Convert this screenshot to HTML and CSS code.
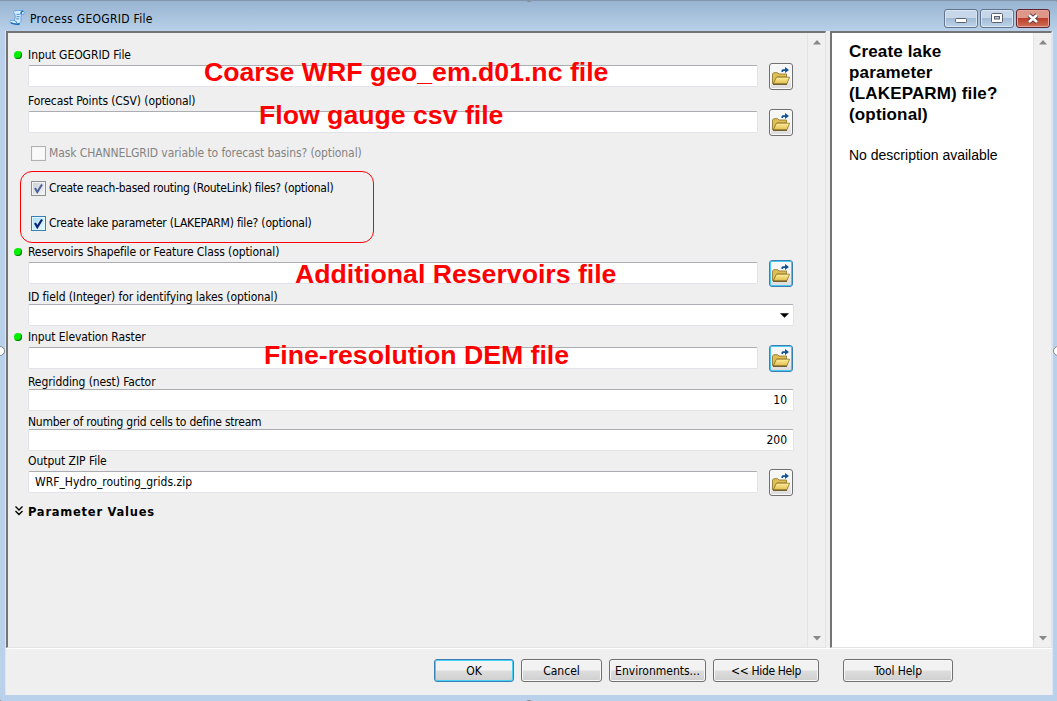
FILE: index.html
```html
<!DOCTYPE html>
<html lang="en">
<head>
<meta charset="utf-8">
<title>Process GEOGRID File</title>
<link rel="stylesheet" href="styles.css">
</head>
<body>
<svg class="defs" width="0" height="0">
  <defs>
    <linearGradient id="gold" x1="0" y1="0" x2="0" y2="1"><stop offset="0" stop-color="#fdf09c"/><stop offset="1" stop-color="#e2bd4e"/></linearGradient>
    <symbol id="folder" viewBox="0 0 20 20">
      <path d="M1.500 17.500V8l1.200-1.300h4L8 8h7.500v3H6L2.200 18z" fill="#dfbe55" stroke="#8a7124" stroke-width=".8"/>
      <path d="M2.300 17.800L5.400 11.200h13.200l-2.700 6.600z" fill="url(#gold)" stroke="#8f7325" stroke-width=".8"/>
      <path d="M2 18.300h14" stroke="#5b460e"/>
      <path d="M10.500 6V4.200l1-1H14V1L18 4l-4 3V5h-1.800v1z" fill="#125393"/>
    </symbol>
    <symbol id="down" viewBox="0 0 8 5"><path d="M0 0h8L4 4.500z" fill="#888"/></symbol>
    <symbol id="up" viewBox="0 0 8 5"><path d="M0 4.500h8L4 0z" fill="#888"/></symbol>
  </defs>
</svg>
<div class="window">
  <header class="titlebar">
    <svg class="app-icon" viewBox="0 0 18 18"><path d="M6 1.500Q10 .5 16 1.500Q18 3 16.500 5.500L14 5.500Q13 10 13.500 13.500Q12 17 9 16.500L2 15Q0 13 2 12L6 12.500Q8 8 6.500 5Q4 3.500 6 1.500Z" fill="#d4ecfc" stroke="#5c9fdd"/><path d="M13.500 5.500Q13 2.500 16 1.500M2 15Q8 17.500 12 16" fill="none" stroke="#1a6cbc" stroke-width="1.600"/><path d="M8.500 5.500h3.500M8.500 8h3.500M8 10.500h3.500M6 12.500Q9 13 9 16" fill="none" stroke="#3a7fc6"/></svg>
    <span class="title">Process GEOGRID File</span>
    <div class="controls">
      <span class="ctl"><svg viewBox="0 0 32 17"><rect x="10.500" y="8.500" width="11" height="4" rx="1" fill="#fff" stroke="#59606b"/></svg></span>
      <span class="ctl"><svg viewBox="0 0 32 17"><rect x="10.500" y="3.500" width="11" height="9" rx="1" fill="#fff" stroke="#59606b"/><rect x="13.500" y="6.500" width="5" height="2.500" fill="#b2c8df" stroke="#59606b"/></svg></span>
      <span class="ctl close"><svg viewBox="0 0 32 17"><path d="M12 5l8 7M20 5l-8 7" stroke="#5c3f44" stroke-width="4.600"/><path d="M12 5l8 7M20 5l-8 7" stroke="#fff" stroke-width="2.600"/></svg></span>
    </div>
  </header>
  <main class="client">
    <div class="panes">
      <section class="pane params">
        <div class="form">
          <div class="field file f1"><label class="required l1">Input GEOGRID File</label><div class="line"><div class="input"></div><button class="browse"><svg><use href="#folder"/></svg></button></div></div>
          <div class="field file f2"><label class="l2">Forecast Points (CSV) (optional)</label><div class="line"><div class="input"></div><button class="browse"><svg><use href="#folder"/></svg></button></div></div>
          <div class="check disabled c1"><i class="box"></i><span class="t1">Mask CHANNELGRID variable to forecast basins? (optional)</span></div>
          <div class="check c2"><i class="box"><svg viewBox="0 0 13 13"><path d="M3 6l2.300 4L10 2.500" fill="none" stroke="#4a5f9c" stroke-width="2"/></svg></i><span class="t2">Create reach-based routing (RouteLink) files? (optional)</span></div>
          <div class="check focus c3"><i class="box"><svg viewBox="0 0 13 13"><path d="M3 6l2.300 4L10 2.500" fill="none" stroke="#0b2478" stroke-width="2.200"/></svg></i><span class="t3">Create lake parameter (LAKEPARM) file? (optional)</span></div>
          <div class="field file f3"><label class="required l3">Reservoirs Shapefile or Feature Class (optional)</label><div class="line"><div class="input"></div><button class="browse hot"><svg><use href="#folder"/></svg></button></div></div>
          <div class="field f4"><label class="l4">ID field (Integer) for identifying lakes (optional)</label><div class="input select"><svg viewBox="0 0 8 4"><path d="M0 0h8L4 4z"/></svg></div></div>
          <div class="field file f5"><label class="required l5">Input Elevation Raster</label><div class="line"><div class="input"></div><button class="browse hot"><svg><use href="#folder"/></svg></button></div></div>
          <div class="field f6"><label class="l6">Regridding (nest) Factor</label><div class="input number">10</div></div>
          <div class="field f7"><label class="l7">Number of routing grid cells to define stream</label><div class="input number">200</div></div>
          <div class="field file f8"><label class="l8">Output ZIP File</label><div class="line"><div class="input"><span class="zip">WRF_Hydro_routing_grids.zip</span></div><button class="browse"><svg><use href="#folder"/></svg></button></div></div>
          <div class="group"><svg viewBox="0 0 8 10"><path d="M.5 .5L4 4 7.500 .5M.5 5L4 8.500 7.500 5" fill="none" stroke="#000" stroke-width="1.400"/></svg><span>Parameter Values</span></div>
        </div>
        <div class="scroll"><svg><use href="#up"/></svg><svg><use href="#down"/></svg></div>
      </section>
      <section class="pane help">
        <div class="help-text"><h1><span>Create lake</span><span>parameter</span><span>(LAKEPARM) file?</span><span>(optional)</span></h1><p>No description available</p></div>
        <div class="scroll"><svg><use href="#up"/></svg><svg><use href="#down"/></svg></div>
      </section>
    </div>
    <footer class="actions">
      <button class="btn default">OK</button>
      <button class="btn cancel">Cancel</button>
      <button class="btn env">Environments...</button>
      <button class="btn hide">&lt;&lt; Hide Help</button>
      <button class="btn tool">Tool Help</button>
    </footer>
  </main>
  <div class="note n1">Coarse WRF geo_em.d01.nc file</div>
  <div class="note n2">Flow gauge csv file</div>
  <div class="note n3">Additional Reservoirs file</div>
  <div class="note n4">Fine-resolution DEM file</div>
  <div class="outline"></div>
  <i class="handle h-tl"></i><i class="handle h-t"></i><i class="handle h-tr"></i><i class="handle h-l"></i><i class="handle h-r"></i><i class="handle h-bl"></i><i class="handle h-b"></i>
</div>
</body>
</html>
```
FILE: styles.css
```css
* { box-sizing: border-box; }
body { margin: 0; font: 12px/16px "DejaVu Sans Condensed", "Noto Sans", sans-serif; color: #000; }
.defs { position: absolute; }
.window { position: relative; width: 1057px; height: 701px; overflow: hidden; display: flex; flex-direction: column; padding: 0 4px 6px 5px; background: linear-gradient(#98b4d1 0, #b9d1ea 31px, #b9d1ea 100%); border-top: 1px solid #8295aa; }
.titlebar { height: 30px; flex: none; display: flex; align-items: flex-start; padding: 8px 3px 0 4px; }
.app-icon { width: 16px; height: 17px; }
.title { margin: 2px 0 0 5px; font-size: 12px; letter-spacing: .3px; }
.controls { margin-left: auto; display: flex; gap: 2px; }
.ctl { width: 34px; height: 19px; border: 1px solid #62748c; border-radius: 3px; box-shadow: inset 0 0 0 1px #d9e6f3; background: linear-gradient(#c5d7e9 45%, #a2bbd5 50%, #bed4e9); }
.ctl svg { display: block; width: 32px; height: 17px; }
.close { border-color: #5d2630; box-shadow: inset 0 0 0 1px #e5a59a; background: linear-gradient(#df9789 45%, #bd3e2b 50%, #ce7057); }
.client { flex: 1; display: flex; flex-direction: column; background: #efefef; border-left: 1px solid #dbe7f4; border-right: 1px solid #dbe7f4; }
.panes { height: 618px; display: flex; gap: 4px; border-bottom: 1px solid #fff; }
.pane { display: flex; border: solid; border-width: 2px 1px 1px 2px; border-color: #747474 #e3e3e3 #e3e3e3 #747474; }
.params { width: 820px; }
.help { flex: 1; background: #fff; }
.form { flex: 1; padding: 14px 13px 0 20px; }
.scroll { width: 18px; background: #f0f0f0; border-left: 1px solid #e4e4e4; display: flex; flex-direction: column; justify-content: space-between; align-items: center; padding: 7px 0 6px; }
.scroll svg { width: 8px; height: 5px; }
.field label { display: block; width: max-content; height: 15px; position: relative; white-space: nowrap; }
.file label { height: 18px; }
.required::before { content: ""; position: absolute; left: -14px; top: 4px; width: 8px; height: 8px; border-radius: 50%; background: #00f000; box-shadow: inset -1px -1px 0 #087b08; }
.l1 { letter-spacing: -.05px; }
.l2, .l3, .l4, .l5, .l6, .t1 { letter-spacing: -.1px; }
.l7 { letter-spacing: -.24px; }
.l8 { letter-spacing: -.05px; }
.t2 { letter-spacing: -.28px; }
.t3 { letter-spacing: -.2px; }
.line { display: flex; align-items: center; height: 22px; gap: 11px; }
.input { height: 22px; width: 100%; background: #fff; border: 1px solid #e2e3ea; border-top-color: #abadb3; border-radius: 2px; padding: 2px 6px; }
.line .input { width: 730px; }
.browse { width: 24px; height: 27px; flex: none; padding: 0; border: 1px solid #707070; border-radius: 3px; background: linear-gradient(#f6f6f6 50%, #dadada); box-shadow: inset 0 0 0 1px #fafafa; display: grid; place-items: center; }
.browse svg { width: 20px; height: 20px; }
.hot { border-color: #3c7fb1; box-shadow: inset 0 0 0 1px #48c8f4; }
.f2 { margin-top: 6px; }
.f3 { margin-top: 13px; }
.f4 { margin-top: 5px; }
.f5 { margin-top: 3px; }
.f6 { margin-top: 5px; }
.f7 { margin-top: 3px; }
.f8 { margin-top: 2px; }
.select { display: flex; justify-content: flex-end; align-items: center; padding: 0 4px; }
.select svg { width: 9px; height: 5px; }
.number { text-align: right; }
.check { display: flex; height: 16px; gap: 3px; margin: 19px 0 0 3px; align-items: center; white-space: nowrap; }
.c1 { margin-top: 12px; }
.box { width: 15px; height: 15px; border: 1px solid #8e8f8f; background: linear-gradient(135deg, #c8ced6, #f6f6f6); box-shadow: inset 0 0 0 1px #f4f4f4; }
.box svg { display: block; width: 13px; height: 13px; }
.disabled { color: #838383; }
.disabled .box { border-color: #b1b1b1; background: #f9f9f9; }
.focus .box { border-color: #3c7fb1; background: linear-gradient(135deg, #a6dcf6, #eefafe); box-shadow: inset 0 0 0 1px #def9fa; }
.group { display: flex; align-items: center; gap: 5px; height: 16px; margin: 10px 0 0 -13px; font: bold 11.500px/16px "DejaVu Sans", sans-serif; letter-spacing: .75px; }
.group svg { width: 8px; height: 10px; }
.group span { padding-top: 1px; }
.help-text { flex: 1; padding: 8px 0 0 17px; font: 14px/21px "Liberation Sans", Arial, sans-serif; white-space: nowrap; }
.help-text h1 { margin: 0; font-size: 17px; line-height: 21px; letter-spacing: .15px; }
.help-text h1 span { display: block; }
.help-text p { margin: 20px 0 0; }
.actions { display: flex; padding: 10px 0 0 428px; gap: 7px; }
.btn { width: 80px; height: 23px; padding: 0; font: inherit; color: #000; border: 1px solid #707070; border-radius: 3px; background: linear-gradient(#f2f2f2 48%, #dddddd 52%, #cfcfcf); box-shadow: inset 0 0 0 1px #f8f8f8; white-space: nowrap; }
.default { border-color: #3c7fb1; box-shadow: inset 0 0 0 1px #48d0f7; }
.cancel { width: 81px; }
.env { width: 97px; }
.hide { width: 106px; letter-spacing: -.35px; }
.tool { width: 110px; margin-left: 17px; letter-spacing: -.1px; }
.note { position: absolute; font: bold 26.67px/30px "Liberation Sans", Arial, sans-serif; color: #f00; white-space: nowrap; }
.n1 { left: 204px; top: 56px; }
.n2 { left: 259px; top: 99px; }
.n3 { left: 295px; top: 258px; }
.n4 { left: 264px; top: 339px; }
.outline { position: absolute; left: 20px; top: 170px; width: 354px; height: 72px; border: 1px solid #f00; border-radius: 12px; }
.handle { position: absolute; width: 10px; height: 10px; border: 1.500px solid #888; border-radius: 50%; background: #fff; }
.h-tl { left: -7px; top: -9px; }
.h-t { left: 524px; top: -9px; }
.h-tr { right: -6px; top: -9px; }
.h-l { left: -5px; top: 345px; }
.h-r { right: -6px; top: 345px; }
.h-bl { left: -7px; bottom: -8px; }
.h-b { left: 524px; bottom: -9px; }
```
